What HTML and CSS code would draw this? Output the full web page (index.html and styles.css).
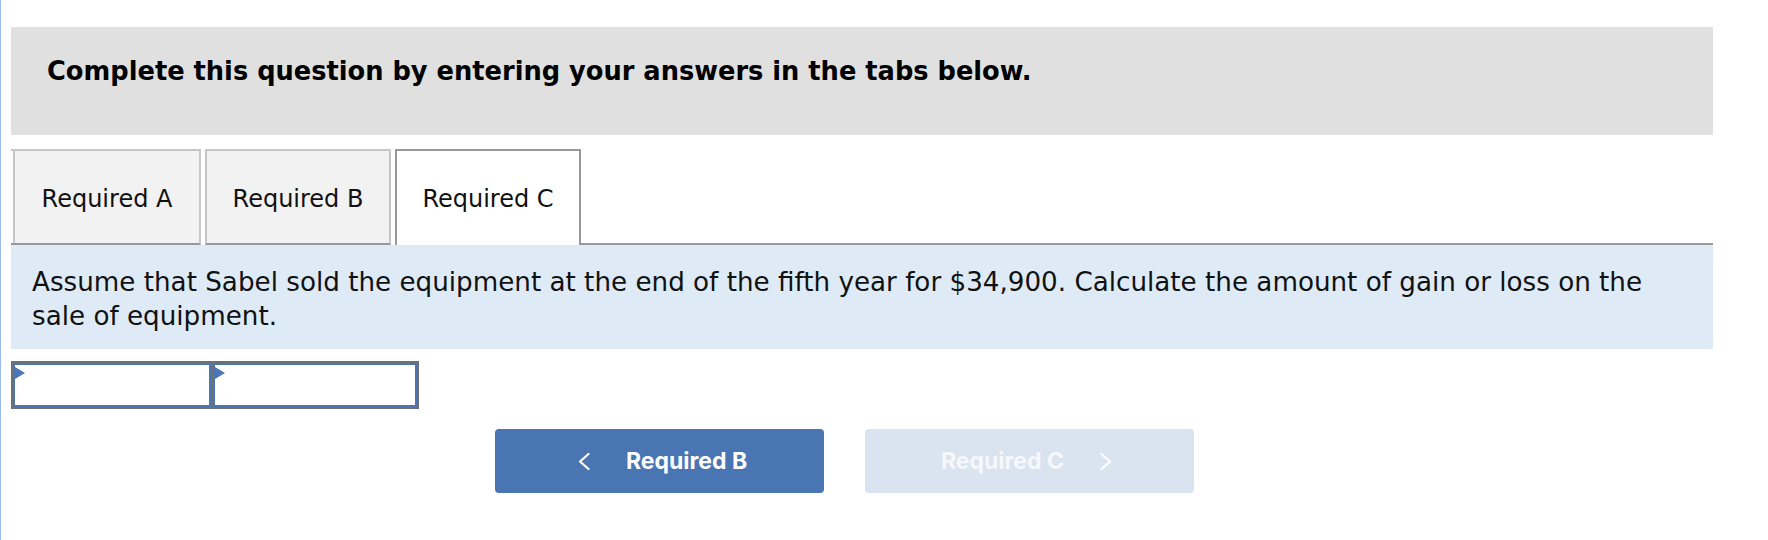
FILE: index.html
```html
<!DOCTYPE html>
<html lang="en">
<head>
<meta charset="utf-8">
<title>Required C</title>
<link rel="stylesheet" href="styles.css">
</head>
<body>
<div class="page">
  <div class="instructions">Complete this question by entering your answers in the tabs below.</div>

  <div class="tabs">
    <div class="tab">Required A</div>
    <div class="tab">Required B</div>
    <div class="tab active">Required C</div>
    <div class="tab-fill"></div>
  </div>

  <div class="prompt">Assume that Sabel sold the equipment at the end of the fifth year for $34,900. Calculate the amount of gain or loss on the sale of equipment.</div>

  <div class="answer-grid">
    <div class="cell cell-a"><span class="flag"></span></div>
    <div class="cell cell-b"><span class="flag"></span></div>
  </div>

  <div class="nav">
    <button class="nav-btn prev" type="button">
      <svg class="chev" width="12" height="17" viewBox="0 0 12 17"><path d="M10.5 1 L2 8.5 L10.5 16" fill="none" stroke="#fff" stroke-width="2.2" stroke-linecap="round" stroke-linejoin="round"/></svg>
      <span>Required B</span>
    </button>
    <button class="nav-btn next" type="button">
      <span>Required C</span>
      <svg class="chev" width="12" height="17" viewBox="0 0 12 17"><path d="M1.5 1 L10 8.5 L1.5 16" fill="none" stroke="#fff" stroke-width="2.2" stroke-linecap="round" stroke-linejoin="round"/></svg>
    </button>
  </div>
</div>
</body>
</html>
```

FILE: styles.css
```css
html, body {
  margin: 0;
  padding: 0;
  background: #ffffff;
}

.page {
  border-left: 1px solid #9bbaf0;
  min-height: 540px;
  box-sizing: border-box;
  padding: 27px 55px 0 10px;
  font-family: "DejaVu Sans", Verdana, sans-serif;
  color: #111;
}

.instructions {
  background: #e0e0e0;
  height: 108px;
  box-sizing: border-box;
  padding: 29px 0 0 36px;
  font-weight: bold;
  font-size: 25.7px;
  line-height: 30px;
  color: #000;
}

.tabs {
  display: flex;
  margin-top: 14px;
  height: 96px;
}

.tab {
  box-sizing: border-box;
  height: 96px;
  width: 186px;
  margin-left: 4px;
  background: #f2f2f2;
  border: 2px solid #c6c6c6;
  border-bottom: 2px solid #999;
  display: flex;
  align-items: center;
  justify-content: center;
  padding-top: 4px;
  font-size: 24px;
  color: #111;
  position: relative;
}

.tab:first-child {
  width: 190px;
  margin-left: 0;
  border-left: none;
  padding-left: 4px;
  box-shadow: inset 2px 0 0 #fff, inset 4px 0 0 #c6c6c6;
}

.tab.active {
  background: #fff;
  border: 2px solid #999;
  border-bottom: none;
  padding-top: 4px;
  padding-bottom: 2px;
}

.tab-fill {
  flex: 1;
  border-bottom: 2px solid #999;
}

.prompt {
  background: #deebf7;
  height: 104px;
  box-sizing: border-box;
  padding: 20px 40px 0 21px;
  font-size: 26.2px;
  line-height: 34px;
  color: #111;
}

.answer-grid {
  margin-top: 12px;
  display: grid;
  grid-template-columns: 198px 204px;
  gap: 2px;
  width: max-content;
  background: #707070;
  border: 2px solid #707070;
}

.cell {
  box-sizing: border-box;
  height: 44px;
  background: #fff;
  border: 2px solid #4a76b8;
  position: relative;
}

.flag {
  position: absolute;
  left: 0;
  top: 2px;
  width: 0;
  height: 0;
  border-top: 6px solid transparent;
  border-bottom: 6px solid transparent;
  border-left: 10px solid #4a76b8;
}

.nav {
  display: flex;
  gap: 41px;
  margin-top: 20px;
  padding-left: 484px;
}

.nav-btn {
  width: 329px;
  height: 64px;
  border: none;
  border-radius: 4px;
  display: flex;
  align-items: center;
  justify-content: center;
  gap: 36px;
  font-family: Inter, "Noto Sans", sans-serif;
  font-weight: 700;
  font-size: 23px;
  letter-spacing: 0;
  color: #fff;
  padding: 0;
}

.nav-btn.prev {
  background: #4a75b3;
  padding-left: 6px;
}

.nav-btn.next {
  background: #dae3f0;
  color: #f6f8fc;
  padding-right: 6px;
}

.chev {
  display: block;
}
```
